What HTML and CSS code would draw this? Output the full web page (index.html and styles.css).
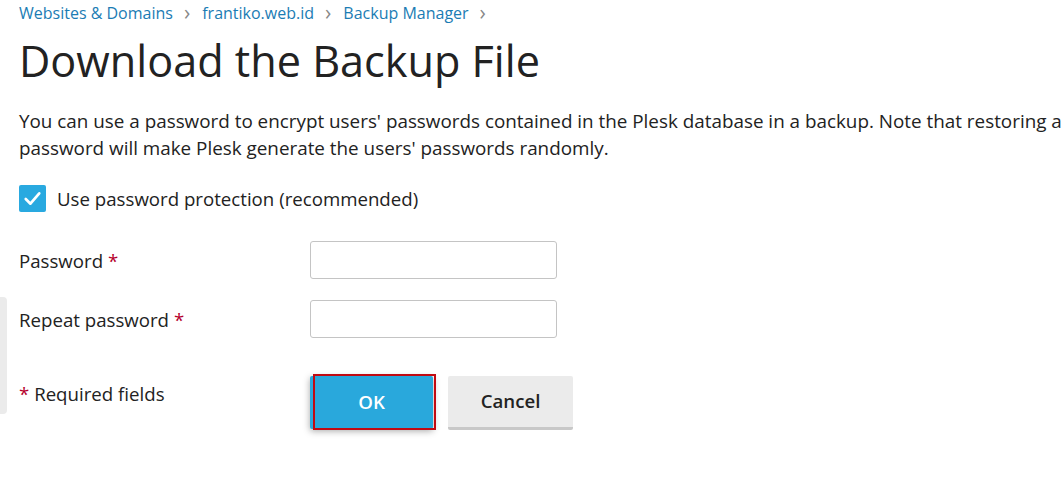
FILE: index.html
```html
<!DOCTYPE html>
<html>
<head>
<meta charset="utf-8">
<link rel="stylesheet" href="styles.css">
</head>
<body>
<div class="side-handle"></div>
<main class="page">
  <nav class="crumbs">
    <a href="#">Websites &amp; Domains</a><span class="chev">&#8250;</span>
    <a href="#">frantiko.web.id</a><span class="chev">&#8250;</span>
    <a href="#">Backup Manager</a><span class="chev">&#8250;</span>
  </nav>
  <h1 class="title">Download the Backup File</h1>
  <p class="intro">You can use a password to encrypt users' passwords contained in the Plesk database in a backup. Note that restoring a<br>password will make Plesk generate the users' passwords randomly.</p>
  <label class="check">
    <span class="box"><svg viewBox="0 0 26 26" width="26" height="26"><path d="M6.5 13.5 L11 18 L19.5 8" fill="none" stroke="#fff" stroke-width="2.6" stroke-linecap="round" stroke-linejoin="round"/></svg></span>
    <span>Use password protection (recommended)</span>
  </label>
  <div class="form">
    <div class="row">
      <div class="label">Password <span class="req">*</span></div>
      <input class="field" type="password">
    </div>
    <div class="row">
      <div class="label">Repeat password <span class="req">*</span></div>
      <input class="field" type="password">
    </div>
    <div class="row actions">
      <div class="label"><span class="req">*</span> Required fields</div>
      <div class="buttons">
        <button class="btn btn-ok">OK</button>
        <button class="btn btn-cancel">Cancel</button>
      </div>
    </div>
  </div>
</main>
</body>
</html>
```
FILE: styles.css
```css
html, body {
  margin: 0;
  padding: 0;
  background: #fff;
  overflow: hidden;
}
body {
  font-family: "Open Sans", "DejaVu Sans", sans-serif;
  color: #222;
  width: 1064px;
  height: 486px;
  position: relative;
}
.side-handle {
  position: absolute;
  left: 0;
  top: 297px;
  width: 7px;
  height: 117px;
  background: #ebebeb;
  border-radius: 0 4px 4px 0;
}
.page {
  padding: 0 0 0 19px;
}
.crumbs {
  display: flex;
  align-items: center;
  font-size: 16px;
  line-height: 20px;
  padding-top: 3px;
  white-space: nowrap;
}
.crumbs a {
  color: #1b7cb4;
  text-decoration: none;
}
.chev {
  color: #888;
  font-size: 21px;
  margin: 0 12px 0 11px;
  line-height: 20px;
  position: relative;
  top: -1px;
}
.title {
  font-size: 43.2px;
  font-weight: 400;
  line-height: 56px;
  margin: 10px 0 0;
  color: #222;
  white-space: nowrap;
}
.intro {
  font-size: 18.85px;
  line-height: 27px;
  margin: 19px 0 0;
  white-space: nowrap;
}
.check {
  display: flex;
  align-items: center;
  gap: 11px;
  font-size: 18.67px;
  margin-top: 23px;
  height: 27px;
}
.box {
  width: 27px;
  height: 27px;
  background: #29a9e0;
  border-radius: 2px;
  display: block;
}
.box svg { display: block; width: 27px; height: 27px; }
.form {
  margin-top: 29px;
  display: flex;
  flex-direction: column;
}
.row {
  display: flex;
  align-items: center;
  height: 38px;
  margin-bottom: 21px;
}
.label {
  width: 291px;
  font-size: 18.67px;
  flex: none;
}
.req {
  color: #b5002c;
}
.field {
  width: 247px;
  height: 38px;
  box-sizing: border-box;
  border: 1px solid #c4c4c4;
  border-radius: 3px;
  background: #fff;
  margin: 0;
  padding: 0 8px;
  font: inherit;
}
.row.actions {
  margin-top: 17px;
  align-items: flex-start;
  height: auto;
}
.row.actions .label {
  padding-top: 5px;
}
.buttons {
  display: flex;
  gap: 15px;
}
.btn {
  font-family: "Open Sans", "DejaVu Sans", sans-serif;
  font-size: 18.67px;
  font-weight: 600;
  width: 124px;
  height: 54px;
  border: 0;
  border-radius: 2px;
  margin: 0;
  padding: 0 0 2px;
  cursor: pointer;
}
.btn-ok {
  position: relative;
  background: #29a8dc;
  color: #fff;
  width: 123px;
  height: 53px;
  box-shadow: 0 2px 7px rgba(0, 0, 0, 0.35);
}
.btn-ok::after {
  content: "";
  position: absolute;
  left: 3px;
  top: -2px;
  right: -3px;
  bottom: -1px;
  border: 2px solid #c10a12;
}
.btn-cancel {
  background: #ebebeb;
  color: #222;
  width: 125px;
  border-bottom: 3px solid #c8c8c8;
}
```
